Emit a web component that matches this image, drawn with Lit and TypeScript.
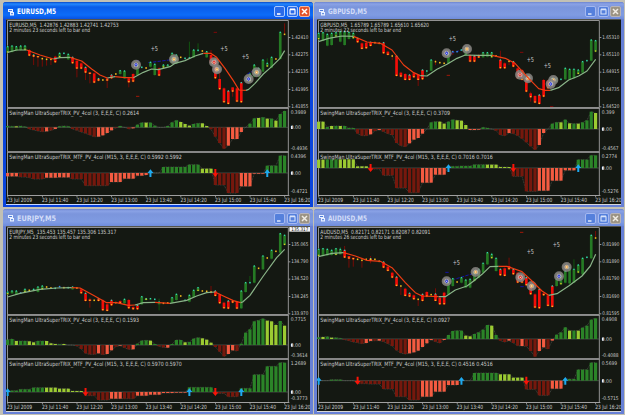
import { LitElement, css, html, svg, nothing } from "lit";
import { customElement, property } from "lit/decorators.js";

interface Marker {
  x: number;
  y: number;
  kind: "blue" | "gold" | "red";
}

interface Histogram {
  label: string;
  zero: number;
  max: string;
  min: string;
  bars: string;
  arrows: string;
}

interface Chart {
  symbol: string;
  quote: string;
  quoteWidth: number;
  countdown: string;
  active: boolean;
  last?: string;
  prices: string[];
  // drawing origin of candles, average, markers and notes
  origin: [number, number];
  // "r150-167/140-195": colour, body top-bottom, wick top-bottom; y/c/b = dot only
  candles: string;
  average: string[];
  markers: Marker[];
  notes: [number, number][];
  dashes: [number, number, number, number, string][];
  trix: Histogram;
  mtf: Histogram;
}

// all chart geometry is in thirds of a pixel
const U = 3;
const WIDTH = 304 * U;
const AXIS = 847;
const STEP = 12.98;
const FIRST = 5;

const TIMES = ["2009", "11:40", "12:20", "13:00", "13:40", "14:20", "15:00", "15:40", "16:20"];

const barColors: Record<string, string> = {
  g: "#2b8428",
  l: "#9ccb32",
  d: "#76180d",
  t: "#f45b41",
};

const markerColors = { blue: "#1c2ce0", gold: "#f0a840", red: "#f02818" };

const charts: Chart[] = [
  {
    symbol: "EURUSD",
    quote: "1.42876 1.42883 1.42741 1.42753",
    quoteWidth: 328,
    countdown: "2 minutes 23 seconds left to bar end",
    active: true,
    prices: ["1.42410", "1.42275", "1.42135", "1.41995", "1.41855"],
    origin: [18, 57],
    candles:
      "g140-158 g138-156 g140-152 g138-150 g138-150 r150-167 r165-170/165-195 r168-172/168-200 y176/172-200 y178/172-197 y178/172-195 r170-187 g160-172 c160 g163-178 r172-190 r182-206/182-232 r190-206 r202-218/202-240 r217-222/217-250 r220-248 r236-242 y240 r235-242/232-264 r225-235 y222 g212-222 g213-235 r235-247/235-262 r222-245 g195-225 c202 y204 g187-200 g193-225 r205-227 g195-203 g195-200 g160-190 g165-190 y172 c175 c174/125-176 g150-172 c151/130-155 y153 g155-172 r165-190/150-190 r178-235 r237-268/212-268 r265-307 r273-312 r262-275/262-290 r265-305 r248-307 c240 g222-245 g195-230 g205-230 g180-215 g190-200/175-200 g172-203 y177 g97-177 y103/70-103",
    average: [
      "g 23,157 50,150 80,150",
      "r 80,150 120,165 160,177",
      "g 160,177 180,173 210,172",
      "r 210,172 245,183 275,207 300,225 322,234",
      "g 322,234 345,230",
      "r 345,230 375,233 400,233",
      "g 400,233 430,217 455,207 475,209 510,200 525,190 555,182 585,168 610,160",
      "r 610,160 632,160 650,172 675,205 700,242 717,270 738,271",
      "g 738,271 746,268 765,250 790,222 815,200 840,175 854,152",
    ],
    markers: [
      { x: 408, y: 194, kind: "blue" },
      { x: 522, y: 178, kind: "gold" },
      { x: 642, y: 187, kind: "red" },
      { x: 651, y: 208, kind: "gold" },
      { x: 746, y: 237, kind: "blue" },
      { x: 770, y: 217, kind: "gold" },
    ],
    notes: [[463, 147], [672, 147], [736, 170]],
    dashes: [
      [408, 181, 420, 184, "#1414a8"],
      [445, 188, 508, 180, "#1414a8"],
      [742, 222, 756, 214, "#1414a8"],
      [408, 289, 418, 289, "#a01808"],
      [641, 97, 651, 97, "#800808"],
    ],
    trix: {
      label: "0.2614",
      zero: 54,
      max: "0.3989",
      min: "-0.4936",
      bars: "4g 3g 3l 4g 2g -5d -8d -11d -13d -12t -9d -5t 3g 4g 3g -5d -9d -14d -18d -23d -28d -28t -24t -17t -9t -2d 4g 0g -5d -3t 8g 14g 14l 14g 5g 0g 0g 4g 15g 21g 16l 10l 5l 10g 12g 12l 4l -6d -28d -47d -64d -55t -35t -35t -14t 0g 11g 27g 28l 30g 26l 26g 20l 40g 49g",
      arrows: "",
    },
    mtf: {
      label: "0.5992 0.5992",
      zero: 59,
      max: "0.4396",
      min: "-0.4721",
      bars: "-10t -10t -10t -12d -12d -14d -18d -18d -18d -14t -14t -14t -13t -13t -13t -18d -18d -18d -38d -38d -38d -38d -38d -38d -27t -27t -27t -17t -17t -17t -8t -8t -6t 0g 0g 0g 18g 18g 18g 18g 18g 18g 25g 25g 25g 13l 13l 13l -36d -36d -36d -60d -60d -60d -40t -40t -40t -2t -2t -2t 22g 22g 22g 52g 52g",
      arrows: "u33 d48 u60",
    },
  },
  {
    symbol: "GBPUSD",
    quote: "1.65789 1.65789 1.65610 1.65620",
    quoteWidth: 326,
    countdown: "2 minutes 22 seconds left to bar end",
    active: false,
    prices: ["1.65310", "1.65110", "1.64915", "1.64735", "1.64520"],
    origin: [15, 57],
    candles:
      "g100-118 g98-122 g103-137 g100-135 g98-110 g95-125 g95-135 g97-117 g100-115 r115-127 r130-147 r128-145 r127-138 y128 y130 r128-160 r155-165 y168/163-180 r168-228 r218-230 r222-240 r225-240 r220-232 r225-240/225-258 r210-238 c213/210-225 g180-212 y185/180-195 y188 y190 g160-190 b155/150-165 b155 c150 g145-165 r165-185 r168-185 r165-173 g158-172 g158-170 g158-172 y168 r180-205/152-205 r190-205 y184/180-195 r185-200 r205-235 r210-240 r235-275 r280-292/275-305 r288-308 r285-312 r240-290 r242-265 g235-255 g235-245 c238 g205-238 g208-238 g208-235 g210-222 g185-218 c182 g120-182 g122-155",
    average: [
      "g 19,125 50,115 90,108 125,109",
      "r 125,109 165,126 205,130 240,150 275,195 305,218 325,227",
      "g 325,227 345,228 375,208 405,193 435,175 460,165 500,166 540,166",
      "r 540,166 580,175 609,190 650,235 680,266 700,271 715,271",
      "g 715,271 740,263 770,240 800,228 825,213 851,178",
    ],
    markers: [
      { x: 404, y: 160, kind: "blue" },
      { x: 465, y: 147, kind: "gold" },
      { x: 624, y: 224, kind: "red" },
      { x: 648, y: 235, kind: "gold" },
      { x: 724, y: 240, kind: "gold" },
      { x: 716, y: 252, kind: "blue" },
    ],
    notes: [[421, 115], [655, 180], [706, 197]],
    dashes: [
      [418, 160, 455, 148, "#1414a8"],
      [404, 226, 414, 226, "#a01808"],
      [624, 157, 634, 157, "#800808"],
      [714, 320, 728, 320, "#800808"],
    ],
    trix: {
      label: "0.3709",
      zero: 59,
      max: "0.399",
      min: "-0.4567",
      bars: "22l 22l 6g 9l 9g 9l 9g 3g 3g -14d -20d -20d -16t -6d -3t -8d -14d -18d -42d -50d -53d -43t -32t -27t -14t 0g 20g 22g 22l 16l 22g 28g 26l 25l 12l -3t -3t -2t 5g 3g 0g -5d -18d -20d -12t -14d -20d -29d -40d -52d -62d -48t -12t 0g 16g 20g 20l 28g 17l 16g 16l 20g 26g 52g 48l",
      arrows: "",
    },
    mtf: {
      label: "0.7016 0.7016",
      zero: 44,
      max: "0.2774",
      min: "-0.5276",
      bars: "25l 25l 26g 26g 26g 26l 26l 26l 26l 5l 5l 5l -3d -3d -3d -22d -22d -22d -60d -60d -60d -74d -74d -74d -44t -44t -44t -20t -20t -20t 5g 5g 5g 6g 6g 6g 10g 10g 10g 10l 10l 10l 3l 3l 3l -25d -25d -25d -70d -70d -70d -68t -68t -68t -38t -38t -38t -7t -7t -7t 25g 25g 25g 38g 38g",
      arrows: "d12 u30 d45 u60",
    },
  },
  {
    symbol: "EURJPY",
    quote: "135.453 135.457 135.306 135.317",
    quoteWidth: 321,
    countdown: "2 minutes 23 seconds left to bar end",
    active: false,
    last: "135.317",
    prices: ["135.065", "134.790", "134.520", "134.245", "133.970"],
    origin: [18, 60],
    candles:
      "g258-265 g255-262 g255-265 b261 g250-258 y253 g250-254 g243-258 g240-250 y243 y246 c247 b242 y245 c245 g243-250 y246 r250-262 r262-285 r280-285/275-305 y283 r278-285 r283-313 r295-315 r283-298 y290 r285-292 g280-292 r282-307 r303-310 r298-310 g272-295 g278-282 g278-280 c280 g288-295/278-313 y292 y291 g275-290 g265-282 y270 c283 g268-287 g253-273 g245-255 y255 y256 y258/240-265 r255-270 r265-292 r290-307 r285-308 r285-290 r288-308 g255-307 g230-258 c230/210-232 g180-230 y187 g150-190 y156 g133-158 y136 g83-140 g88-117",
    average: [
      "g 23,273 60,262 120,250 170,246 215,245",
      "r 215,245 240,246 280,268 320,290 350,290 385,298 405,297",
      "g 405,297 430,290 465,289",
      "r 465,289 510,292",
      "g 510,292 560,283 590,270 620,260 645,258",
      "r 645,258 670,270 700,284 722,290",
      "g 722,290 728,288 750,268 790,210 830,155 854,130",
    ],
    markers: [],
    notes: [],
    dashes: [],
    trix: {
      label: "0.1593",
      zero: 86,
      max: "0.7715",
      min: "-0.3614",
      bars: "16g 18g 12l 12g 12g 11l 8l 12g 12g 12l 5l 3l 2g 3l 0g 0g -3d -12d -25d -28d -28d -25t -29d -27t -16t -5d -2t -8d -13d -13t 4g 13g 14g 13l 3g -4d -7d -8t 3g 15g 15g 8l 9g 19g 22g 20l 16l 7l -6d -20d -34d -27t -16t -18d 4g 37g 47g 71g 74g 79g 73l 71l 60l 72g 58l",
      arrows: "",
    },
    mtf: {
      label: "0.5970 0.5970",
      zero: 95,
      max: "1.2689",
      min: "-0.3773",
      bars: "0g 4g 4g 8g 8g 8g 13g 13g 13g 13l 13l 13l 10l 10l 10l 3l 3l 3l -11d -11d -11d -24d -24d -24d -20t -20t -20t -20d -20d -20d -11t -11t -11t -8t -8t -8t -3t -3t -3t -2t -2t -2t 14g 14g 14g 14g 14g 14g -4d -4d -4d -14d -14d -14d 11g 11g 11g 52g 52g 52g 77g 77g 77g 88g 88g",
      arrows: "u0 d18 u42 d48 u54",
    },
  },
  {
    symbol: "AUDUSD",
    quote: "0.82171 0.82171 0.82087 0.82091",
    quoteWidth: 330,
    countdown: "2 minutes 26 seconds left to bar end",
    active: false,
    prices: ["0.81990", "0.81890", "0.81790", "0.81690", "0.81595"],
    origin: [15, 60],
    candles:
      "g130-150 g128-150 g130-148 g133-147 g128-147 g130-145/123-145 r133-155/120-155 r150-158/150-185 r155-160/155-182 y160 y163/155-185 y160 r158-162/150-172 y160 y166 r168-185 r182-195 r200-215 r213-240 y240/238-267 r248-270 r262-272 r268-280 y280/278-300 r265-285 r258-272 y266 r264-285/247-285 r275-295 r260-295 g230-265 g218-240 y228 g215-230 g222-245 g220-245 g198-225 g190-215 g172-200 g140-175 g145-157/140-157 g157-195 r190-208 r187-210 r180-190/155-190 r190-205 r200-230 r210-230 r215-238 r235-265 r265-305 r250-307 r262-268 r268-300 r240-303 g220-240 g210-235 g195-230 g185-232 g190-230/160-230 g177-200 g157-205 c154 g88-157 y96/75-98",
    average: [
      "g 19,152 60,142 95,140",
      "r 95,140 130,150 165,163 205,166 240,185 280,230 310,260 330,270 380,272",
      "g 380,272 400,272 430,252 465,240 485,225 510,205 534,182 560,181",
      "r 560,181 585,181 630,197 660,225 690,255 710,268",
      "g 710,268 735,263 770,240 810,210 835,180 851,145",
    ],
    markers: [
      { x: 404, y: 226, kind: "blue" },
      { x: 491, y: 198, kind: "gold" },
      { x: 625, y: 214, kind: "red" },
      { x: 659, y: 240, kind: "gold" },
      { x: 741, y: 211, kind: "blue" },
      { x: 764, y: 183, kind: "gold" },
    ],
    notes: [[433, 170], [655, 137], [733, 115]],
    dashes: [
      [400, 199, 412, 199, "#1414a8"],
      [420, 222, 482, 203, "#1414a8"],
      [625, 242, 640, 242, "#1414a8"],
      [624, 79, 636, 79, "#a01808"],
    ],
    trix: {
      label: "0.0927",
      zero: 68,
      max: "0.4908",
      min: "-0.4088",
      bars: "5g 6l 7g 4l 4g 2g -2d -5d -9d -11d -14d -12t -6t -5d -5t -8d -14d -21d -34d -42d -45d -43t -40t -35t -24t -13t -3t -8d -12d -3t 12g 24g 25g 25g 10l 8l 15g 20g 28g 42g 40l 12g -5d -9d -5t -12d -20d -21t -22d -36d -53d -36t -25t -30d -5t 13g 20g 35g 25l 25g 25l 34g 40g 58g 62g",
      arrows: "",
    },
    mtf: {
      label: "0.4516 0.4516",
      zero: 61,
      max: "0.5699",
      min: "-0.5715",
      bars: "0g 0g 0g 3g 3g 3g 0g 0g 0g -9d -9d -9d -10d -10d -10d -25d -25d -25d -48d -48d -48d -58d -58d -58d -48t -48t -48t -33t -33t -33t -13t -13t -13t 0g 0g 0g 23g 23g 23g 23g 23g 23g 19l 19l 19l 9l 9l 9l -26d -26d -26d -44d -44d -44d -24t -24t -24t 5g 5g 5g 33g 33g 33g 54g 54g",
      arrows: "u0 d9 u33 d48 u57",
    },
  },
];

@customElement("chart-window")
export class ChartWindow extends LitElement {
  @property({ attribute: false })
  chart!: Chart;

  static styles = css`
    :host {
      display: block;
      width: 310px;
      height: 205px;
      font-family: "DejaVu Sans Condensed", "DejaVu Sans", sans-serif;
    }
    .window {
      box-sizing: border-box;
      height: 205px;
      border: solid #6780d6;
      border-width: 0 3px 2px;
      border-radius: 3px 3px 0 0;
      background: #6780d6;
    }
    .window.active {
      border-color: #0a44dc;
      background: #0a44dc;
    }
    .title {
      display: flex;
      align-items: center;
      box-sizing: border-box;
      height: 17px;
      margin: 0 -3px;
      padding: 2px 3px 0 4px;
      gap: 2px;
      border-radius: 3px 3px 0 0;
      background: linear-gradient(#6c84d0 0, #8aa2e6 2px, #7b95dc 5px, #7f9be2 13px, #6f8cdc);
      color: #d3ddf8;
    }
    .active .title {
      background: linear-gradient(#0848c8 0, #2488ff 2px, #0a5ce8 5px, #0c6cf8 13px, #0850e0);
      color: #ffffff;
    }
    .logo {
      width: 8px;
      height: 8px;
    }
    .name {
      flex: 1;
      height: 11px;
    }
    .name text {
      fill: currentColor;
      font: bold 7.5px "DejaVu Sans Condensed", sans-serif;
    }
    .buttons {
      display: flex;
      gap: 1.5px;
    }
    .button {
      width: 11px;
      height: 11px;
    }
    .body {
      display: grid;
      grid-template-rows: 89px 44px 43px 9px;
      height: 185px;
      background: #141812;
      border-bottom: 1px solid #d6d6d6;
    }
    .active .body {
      border-bottom-color: #c8d8ff;
    }
    .panel {
      display: block;
      width: 304px;
      height: 100%;
      overflow: hidden;
    }
    .panel text {
      fill: #cacaca;
      font-size: 17.5px;
    }
    .panel .axis {
      font-size: 15px;
    }
    .panel .note {
      font-size: 21px;
    }
    .panel .last {
      fill: #101010;
      font-size: 15px;
    }
  `;

  text(x: number, y: number, width: number, value: string, name = "") {
    return svg`<text class=${name} x=${x} y=${y} textLength=${width} lengthAdjust="spacingAndGlyphs">${value}</text>`;
  }

  candle(code: string, i: number) {
    const [shape, wick] = code.split("/");
    const kind = shape[0];
    const [top, bottom = top] = shape.slice(1).split("-").map(Number);
    const x = FIRST + this.chart.origin[0] + STEP * i;
    const [high, low] = wick ? wick.split("-").map(Number) : [top - 3, bottom + 2];
    const up = kind === "g" || kind === "c";
    const solid = kind === "g" || kind === "r";
    const dots: Record<string, string> = { y: "#e8c820", c: "#34d0b0", b: "#2890f0" };
    return svg`
      <rect x=${x - 1.5} y=${high} width="3" height=${low - high} fill=${up ? "#11540f" : "#760b06"} />
      ${solid
        ? svg`
          <rect x=${x - 4} y=${top} width="8" height=${bottom - top} fill=${up ? "#257a24" : "#f20d08"} />
          ${up || i % 3 === 0 ? svg`<rect x=${x - 2} y=${top - 2} width="4" height="4" fill=${dots.c} />` : nothing}
          ${!up || i % 4 === 0 ? svg`<rect x=${x - 2} y=${bottom - 4} width="4" height="4" fill=${dots.y} />` : nothing}`
        : svg`<rect x=${x - 2.3} y=${top - 2.3} width="4.6" height="4.6" fill=${dots[kind]} />`}
    `;
  }

  marker(m: Marker) {
    return svg`
      <circle cx=${m.x} cy=${m.y} r="11.5" fill="#94908c" fill-opacity="0.55" stroke="#85827f" stroke-width="7" stroke-opacity="0.85" />
      <circle cx=${m.x} cy=${m.y} r="7.5" fill="#c8c4c4" fill-opacity="0.75" />
      <path d="M${m.x - 5} ${m.y}l5 -6l5 6l-5 6z" fill=${markerColors[m.kind]} />
      <rect x=${m.x - 1.5} y=${m.y - 1.5} width="3" height="3" fill="#ffffff" />
    `;
  }

  main() {
    const c = this.chart;
    const [ox, oy] = c.origin;
    return html`<svg class="panel" viewBox="0 0 ${WIDTH} 267" preserveAspectRatio="none">
      <rect width=${WIDTH} height="3" fill="#55554c" />
      <path d="M4.5 264V4.5H${AXIS}V264" fill="none" stroke="#929292" stroke-width="3" />
      <g transform="translate(${-ox} ${-oy})">
        ${c.dashes.map(
          ([x1, y1, x2, y2, color]) => svg`<line x1=${x1} y1=${y1} x2=${x2} y2=${y2} stroke=${color} stroke-width="3" stroke-dasharray="10 4" />`
        )}
        ${c.candles.split(" ").map((code, i) => this.candle(code, i))}
        ${c.markers.map((m) => this.marker(m))}
        ${c.average.map(
          (line) => svg`<polyline points=${line.slice(2)} fill="none" stroke=${line[0] === "g" ? "#8ab488" : "#ee3c12"} stroke-width="3.6" stroke-linejoin="round" />`
        )}
        ${c.notes.map(([x, y]) => this.text(x - 11, y + 7, 22, "+5", "note"))}
      </g>
      <rect x="3" y="264" width=${AXIS - 2} height="3" fill="#8e8e8e" />
      ${this.text(10, 24, c.quoteWidth, `${c.symbol},M5\u00a0 ${c.quote}`)}
      ${this.text(10, 40, 242, c.countdown)}
      ${c.prices.map(
        (price, i) => svg`
          <rect x=${AXIS} y=${54 + 52 * i} width="6" height="3" fill="#929292" />
          ${this.text(856, 60.5 + 51.4 * i, 51, price, "axis")}`
      )}
      ${c.last
        ? svg`<rect x="850" y="3" width="62" height="14" fill="#f4f4f4" />${this.text(856, 16, 51, c.last, "last")}`
        : nothing}
    </svg>`;
  }

  arrow(code: string, zero: number) {
    const x = FIRST + STEP * Number(code.slice(1));
    return code[0] === "u"
      ? svg`<path d="M${x} ${zero - 11}l9 11h-6v12h-6v-12h-6z" fill="#1eaaf0" />`
      : svg`<path d="M${x} ${zero + 12}l9 -11h-6v-13h-6v13h-6z" fill="#fa1408" />`;
  }

  histogram(h: Histogram, name: string, width: number, height: number) {
    const values = h.bars.split(" ").map((bar) => ({
      size: parseInt(bar),
      color: barColors[bar.slice(-1)],
    }));
    const outline = values.map((v, i) => `${FIRST + STEP * i},${h.zero - v.size}`).join(" ");
    return html`<svg class="panel" viewBox="0 0 ${WIDTH} ${height}" preserveAspectRatio="none">
      <rect x="3" width=${AXIS - 2} height="3" fill="#868686" />
      <path d="M4.5 0V${height}M${AXIS} 0V${height}" stroke="#929292" stroke-width="3" />
      <rect x="3" y=${height - 3} width=${AXIS - 2} height="3" fill=${height === 132 ? "#868686" : "none"} />
      <line x1="4" x2=${AXIS} y1=${h.zero + 4} y2=${h.zero + 4} stroke="#5c625a" stroke-width="2" />
      <polyline points=${outline} transform="translate(0 4)" fill="none" stroke="#666a62" stroke-width="1.6" stroke-dasharray="3 2" />
      <g transform="translate(0 4)">
        ${values.map(
          (v, i) => svg`<rect x=${FIRST - 4.8 + STEP * i} y=${v.size > 0 ? h.zero - v.size : h.zero} width="9.6" height=${Math.abs(v.size)} fill=${v.color} />`
        )}
        ${h.arrows ? h.arrows.split(" ").map((a) => this.arrow(a, h.zero)) : nothing}
      </g>
      ${this.text(10, 22, width, `SwingMan UltraSuperTRIX_${name} E,E,E, C) ${h.label}`)}
      ${this.text(854, 18, h.max.length * 7.7, h.max, "axis")}
      ${this.text(854, h.zero + 10, 31, "0.00", "axis")}
      <rect x="855" y=${h.zero} width="5" height="9" fill="#f0f0f0" />
      ${this.text(854, height - 6, 51, h.min, "axis")}
    </svg>`;
  }

  timeline() {
    return html`<svg class="panel" viewBox="0 0 ${WIDTH} 27" preserveAspectRatio="none">
      <rect x="3" width=${AXIS} height="3" fill="#a0a0a0" />
      ${TIMES.map(
        (time, i) => svg`
          <rect x=${FIRST - 1 + 8 * STEP * i} width="2.5" height="7" fill="#a0a0a0" />
          ${this.text(FIRST + 8 * STEP * i - (i ? 1 : 2), 21, i ? 79 : 75, `23 Jul ${time}`)}`
      )}
    </svg>`;
  }

  buttons() {
    const { active } = this.chart;
    const fill = active ? "#2a6ae8" : "#5580dc";
    const edge = active ? "#a8c8ff" : "#a4b8f0";
    const ink = active ? "#ffffff" : "#d8e2fa";
    return html`<div class="buttons">
      <svg class="button" viewBox="0 0 11 11">
        <rect x="0.5" y="0.5" width="10" height="10" rx="1.5" fill=${fill} stroke=${edge} />
        <path d="M3 8h3.5" stroke=${ink} stroke-width="1.6" />
      </svg>
      <svg class="button" viewBox="0 0 11 11">
        <rect x="0.5" y="0.5" width="10" height="10" rx="1.5" fill=${fill} stroke=${edge} />
        <path d="M3 3.8h5v4.2h-5zM3 3.1h5" fill="none" stroke=${ink} stroke-width="1.1" />
      </svg>
      <svg class="button" viewBox="0 0 11 11">
        <rect x="0.5" y="0.5" width="10" height="10" rx="1.5" fill=${active ? "#e4542c" : "#9c9484"} stroke=${active ? "#f4b8a0" : "#b8b4b8"} />
        <path d="M3 3l5 5M8 3l-5 5" stroke=${active ? "#ffffff" : "#f0ece4"} stroke-width="1.5" />
      </svg>
    </div>`;
  }

  render() {
    const c = this.chart;
    return html`<div class="window ${c.active ? "active" : ""}">
      <div class="title">
        <svg class="logo" viewBox="0 0 8 8">
          <path d="M1 1h5v3h-5zM3 4h4v3.5h-4z" fill="#e8f0ff" />
          <path d="M2 2.5h3M4 5.7h2" stroke="#3c70d8" stroke-width="0.9" />
        </svg>
        <svg class="name"><text x="0" y="8" textLength="39" lengthAdjust="spacingAndGlyphs">${c.symbol},M5</text></svg>
        ${this.buttons()}
      </div>
      <div class="body">
        ${this.main()} ${this.histogram(c.trix, "PV_4col (3,", 389, 132)}
        ${this.histogram(c.mtf, "MTF_PV_4col (M15, 3,", 517, 129)} ${this.timeline()}
      </div>
    </div>`;
  }
}

@customElement("app-root")
export class AppRoot extends LitElement {
  static styles = css`
    :host {
      display: block;
    }
    .desktop {
      display: grid;
      grid-template-columns: 310px 310px;
      gap: 1px;
      box-sizing: border-box;
      width: 625px;
      height: 415px;
      padding: 2px 1px 1px 3px;
      background: #c2c0b4;
      overflow: hidden;
    }
  `;

  render() {
    return html`<div class="desktop">
      ${charts.map((chart) => html`<chart-window .chart=${chart}></chart-window>`)}
    </div>`;
  }
}
